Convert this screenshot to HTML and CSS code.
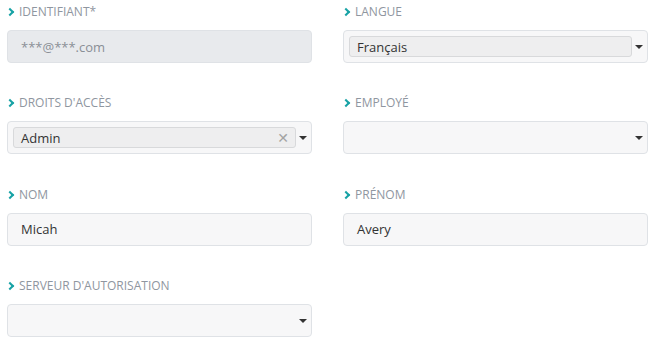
FILE: index.html
```html
<!DOCTYPE html>
<html lang="fr">
  <head>
    <meta charset="UTF-8" />
    <meta name="viewport" content="width=device-width, initial-scale=1.0" />
    <title>Utilisateur</title>
    <link rel="stylesheet" href="styles.css">
  </head>
  <body>
    <div id="form">
      <div class="field">
        <div class="label"><span class="chev"></span>IDENTIFIANT*</div>
        <div class="input disabled">***@***.com</div>
      </div>
      <div class="field">
        <div class="label"><span class="chev"></span>LANGUE</div>
        <div class="input select">
          <div class="tag">Français</div>
          <span class="arrow"></span>
        </div>
      </div>
      <div class="field">
        <div class="label"><span class="chev"></span>DROITS D'ACCÈS</div>
        <div class="input select">
          <div class="tag">Admin<span class="clear">✕</span></div>
          <span class="arrow"></span>
        </div>
      </div>
      <div class="field">
        <div class="label"><span class="chev"></span>EMPLOYÉ</div>
        <div class="input select">
          <div class="empty"></div>
          <span class="arrow"></span>
        </div>
      </div>
      <div class="field">
        <div class="label"><span class="chev"></span>NOM</div>
        <div class="input">Micah</div>
      </div>
      <div class="field">
        <div class="label"><span class="chev"></span>PRÉNOM</div>
        <div class="input">Avery</div>
      </div>
      <div class="field">
        <div class="label"><span class="chev"></span>SERVEUR D'AUTORISATION</div>
        <div class="input select">
          <div class="empty"></div>
          <span class="arrow"></span>
        </div>
      </div>
    </div>
  </body>
</html>
```
FILE: styles.css
```css
body {
  font-family: "Open Sans", Arial, sans-serif;
  margin: 0;
  padding: 3px 11px 0 7px;
  background-color: #fff;
}
#form {
  display: grid;
  grid-template-columns: 305px 305px;
  column-gap: 31px;
  row-gap: 31.4px;
}
.label {
  display: flex;
  align-items: center;
  font-size: 12px;
  line-height: 18px;
  color: #8f96a0;
  margin-bottom: 9px;
}
.chev {
  width: 4px;
  height: 4px;
  border-top: 2px solid #17a2a5;
  border-right: 2px solid #17a2a5;
  transform: rotate(45deg);
  margin: 0 6px 0 0;
}
.input {
  box-sizing: border-box;
  height: 33px;
  border: 1px solid #dfe2e6;
  border-radius: 4px;
  background-color: #f7f7f8;
  font-size: 13px;
  color: #333;
  padding: 0 13px;
  display: flex;
  align-items: center;
}
.input.disabled {
  background-color: #e8eaed;
  color: #8a8f96;
}
.input.select {
  padding: 0 4px 0 5px;
}
.tag {
  flex: 1;
  height: 21px;
  box-sizing: border-box;
  border: 1px solid #d8d9db;
  border-radius: 3px;
  background-color: #eeeeef;
  padding: 0 7px;
  display: flex;
  align-items: center;
}
.empty {
  flex: 1;
}
.clear {
  margin-left: auto;
  margin-right: -1px;
  color: #a3a3a3;
  font-size: 14px;
  font-weight: bold;
  font-family: "DejaVu Sans", sans-serif;
}
.arrow {
  width: 0;
  height: 0;
  border-left: 4px solid transparent;
  border-right: 4px solid transparent;
  border-top: 4px solid #333;
  margin: 1px 0 0 3px;
}
```
